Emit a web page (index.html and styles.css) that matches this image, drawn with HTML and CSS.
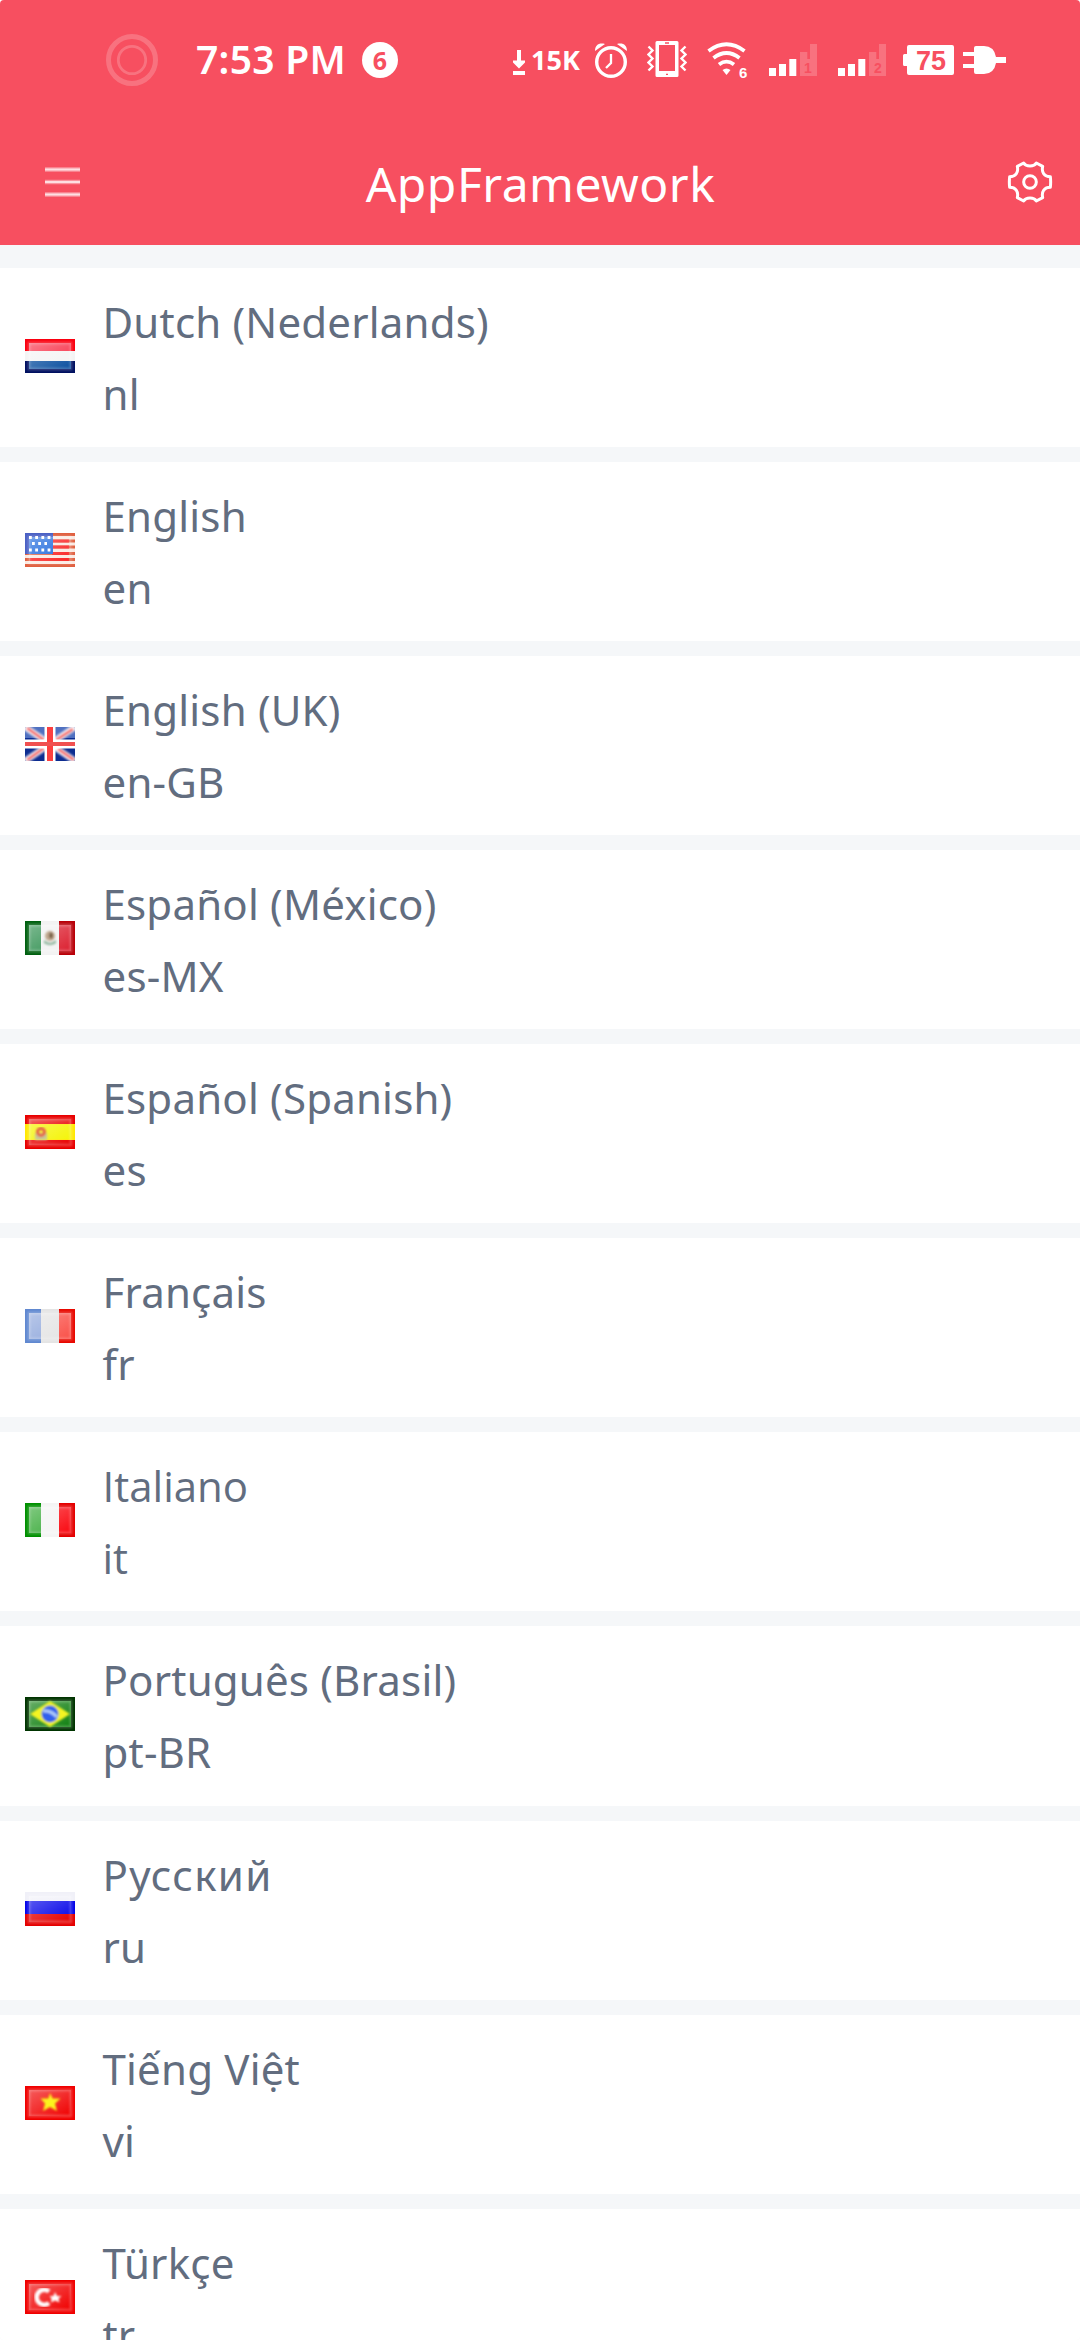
FILE: index.html
```html
<!DOCTYPE html>
<html lang="en">
<head>
<meta charset="utf-8">
<title>AppFramework</title>
<link rel="stylesheet" href="styles.css">
</head>
<body>
<svg width="0" height="0" class="defs">
  <defs>
    <linearGradient id="shine" x1="0" y1="0" x2="1" y2="1">
      <stop offset="0" stop-color="#fff" stop-opacity=".36"/>
      <stop offset="1" stop-color="#fff" stop-opacity="0"/>
    </linearGradient>
    <filter id="soft" x="-10%" y="-10%" width="120%" height="120%"><feGaussianBlur stdDeviation=".9"/></filter>
    <symbol id="gloss" viewBox="0 0 50 34">
      <rect x="4" y="4" width="42" height="26" fill="url(#shine)"/>
      <rect x="4" y="4" width="42" height="26" fill="none" stroke="#fff" stroke-opacity=".24" stroke-width="2.6" filter="url(#soft)"/>
    </symbol>
    <symbol id="signal" viewBox="0 0 48 32">
      <path fill="#fff" d="M0 24h7v8H0zM10 20h7v12h-7zM20.300 15h7v17h-7z"/>
      <path fill="#fff" fill-opacity=".2" d="M31 8h7.300v7H41V0h7v32H31z"/>
    </symbol>
  </defs>
</svg>

<div class="screen">
  <header class="header">
    <div class="status">
      <svg class="ring" width="52" height="52" viewBox="0 0 52 52" fill="none" stroke="#fff" stroke-opacity=".2">
        <circle cx="26" cy="26" r="23.500" stroke-width="5"/><circle cx="26" cy="26" r="13.700" stroke-width="2.800"/>
      </svg>
      <span class="time">7:53 PM</span>
      <span class="badge">6</span>
      <svg class="down" width="12" height="25" viewBox="0 0 12 25" fill="#fff"><path d="M4 0h4v10.500h4v2L6 18.500l-6-6v-2h4zM0 21h12v4H0z"/></svg>
      <span class="speed">15K</span>
      <svg class="alarm" width="34" height="36" viewBox="0 0 34 36" fill="none" stroke="#fff">
        <circle cx="17" cy="20" r="14.300" stroke-width="3.400"/>
        <path d="M17 12v9l-5 5" stroke-width="2.300"/>
        <path d="M1 9C1 3 5 .5 11 2L1 9zM33 9c0-6-4-8.500-10-7l10 7z" fill="#fff" stroke="none"/>
      </svg>
      <svg class="vibrate" width="40" height="36" viewBox="0 0 40 36">
        <path fill="#fff" fill-rule="evenodd" d="M10 0h20q1.500 0 1.500 1.500v33q0 1.500-1.500 1.500H10q-1.500 0-1.500-1.500v-33Q8.500 0 10 0zM12 4v26h16V4z"/>
        <path d="M18 2h4M19 33.300h2" stroke="#f74f60" stroke-width="1.300"/>
        <path d="M1.500 5.500l4 4-4 4 4 4-4 4 4 4-4 4M38.500 5.500l-4 4 4 4-4 4 4 4-4 4 4 4" fill="none" stroke="#fff" stroke-width="2.400"/>
      </svg>
      <svg class="wifi" width="44" height="40" viewBox="0 0 44 40" fill="none" stroke="#fff" stroke-width="3.800">
        <path d="M1.500 11Q19.500-2.500 37.500 11M6.500 18q13-10 26 0M12 24.500q7.500-5.800 15 0"/>
        <path d="M15.500 30q4-3 8 0l-4 5z" fill="#fff" stroke="none"/>
        <text x="32" y="37.500" class="wifi-gen">6</text>
      </svg>
      <svg class="sim1" width="48" height="32" viewBox="0 0 48 32"><use href="#signal" width="48" height="32"/><text x="39" y="29" class="sim">1</text></svg>
      <svg class="sim2" width="48" height="32" viewBox="0 0 48 32"><use href="#signal" width="48" height="32"/><text x="40" y="29" class="sim">2</text></svg>
      <svg class="battery" width="51" height="30" viewBox="0 0 51 30">
        <path fill="#fff" d="M6 0h43q2 0 2 2v26q0 2-2 2H6q-2 0-2-2v-7H1.500Q0 21 0 19.500v-9Q0 9 1.500 9H4V2q0-2 2-2z"/>
        <text x="28" y="24.500" class="charge">75</text>
      </svg>
      <svg class="plug" width="43" height="28" viewBox="0 0 43 28" fill="#fff"><path d="M13 0h8q10 0 12 11h10v6H33q-2 11-12 11h-8q-2 0-2-2v-4H0v-4h11v-8H0V6h11V2q0-2 2-2z"/></svg>
    </div>
    <div class="bar">
      <svg class="menu" width="35" height="30" viewBox="0 0 35 30" stroke="#fff">
        <path d="M0 2.500h35M0 15h35M0 27.500h35" stroke-width="4.400" stroke-opacity=".4"/><path d="M0 2.500h35M0 15h35M0 27.500h35" stroke-width="2" stroke-opacity=".7"/>
      </svg>
      <h1 class="title">AppFramework</h1>
      <svg class="gear" width="46" height="44" viewBox="81 92 138 132" fill="none" stroke="#fff" stroke-width="9" stroke-linejoin="round">
        <path d="M131 101C138 113 162 113 169 101L188 111C184 130 193 142 211 142Q213 158 211 174C193 174 184 186 188 205L169 215C162 203 138 203 131 215L112 205C116 186 107 174 89 174Q87 158 89 142C107 142 116 130 112 111Z"/>
        <circle cx="150" cy="158" r="19"/>
      </svg>
    </div>
  </header>

  <main class="list">
    <div class="row">
      <svg class="flag" viewBox="0 0 50 34">
        <path fill="#fa0010" d="M0 0h50v12H0z"/><path fill="#f4f4f4" d="M0 12h50v10H0z"/><path fill="#001060" d="M0 22h50v12H0z"/>
        <path fill="#f83048" d="M4 4h42v8H4z"/><path fill="#0c50a0" d="M4 22h42v8H4z"/><use href="#gloss"/>
      </svg>
      <div class="text"><div>Dutch (Nederlands)</div><div>nl</div></div>
    </div>
    <div class="row">
      <svg class="flag" viewBox="0 0 50 34">
        <path fill="#fae8e0" d="M0 0h50v34H0z"/>
        <path stroke="#e06040" stroke-width="3" d="M0 1.500h50M0 8h50M0 14h50M0 20.500h50M0 26.500h50M0 32.500h50"/>
        <path stroke="#fa2020" stroke-width="3" d="M27 8h17M27 14h17M27 20.500h17M5 26.500h39"/>
        <path fill="#4a60c4" d="M0 0h28v21H0z"/><path fill="#1a66dc" d="M4 4h24v17H4z"/>
        <path stroke="#fff" stroke-width="2.800" stroke-dasharray="2.800 3.400" d="M4 4.500h22M7 10.500h15M4 17h22"/><use href="#gloss"/>
      </svg>
      <div class="text"><div>English</div><div>en</div></div>
    </div>
    <div class="row">
      <svg class="flag" viewBox="0 0 50 34">
        <path fill="#0c2c90" d="M0 0h50v34H0z"/><path fill="#5070c0" d="M0 0h50v11H0z"/>
        <g filter="url(#soft)"><path stroke="#fff" stroke-width="6" d="M0 0l50 34M50 0L0 34"/><path stroke="#f46868" stroke-width="3" d="M2 1l17 12M48 2L31 13M33 22l16 11M2 33l17-12"/></g>
        <path stroke="#fff" stroke-width="11" d="M25 0v34"/><path stroke="#fff" stroke-width="9" d="M0 17h50"/><path stroke="#fc4040" stroke-width="6" d="M25 0v34"/><path stroke="#f05050" stroke-width="4" d="M0 17h50"/>
      </svg>
      <div class="text"><div>English (UK)</div><div>en-GB</div></div>
    </div>
    <div class="row">
      <svg class="flag" viewBox="0 0 50 34">
        <path fill="#006010" d="M0 0h16v34H0z"/><path fill="#f2f2f2" d="M16 0h18v34H16z"/><path fill="#b80008" d="M34 0h16v34H34z"/>
        <path fill="#309050" d="M4 4h12v26H4z"/><path fill="#dc2030" d="M34 4h12v26H34z"/><use href="#gloss"/>
        <g filter="url(#soft)"><circle cx="25" cy="15" r="5" fill="#c0a890"/><path d="M25 11l3 2-1 5-3-2z" fill="#70583c"/><path d="M19 19q6 6 12 0v3q-6 4-12 0z" fill="#86b096"/></g>
      </svg>
      <div class="text"><div>Español (México)</div><div>es-MX</div></div>
    </div>
    <div class="row">
      <svg class="flag" viewBox="0 0 50 34">
        <path fill="#e80000" d="M0 0h50v34H0z"/><path fill="#ffe800" d="M0 9h50v16H0z"/><path fill="#f4f400" d="M4 10h42v14H4z"/><use href="#gloss"/>
        <g filter="url(#soft)"><path d="M10 18h12v7H10z" fill="#c8c898"/><circle cx="16" cy="17" r="3.500" fill="none" stroke="#e46048" stroke-width="3"/></g>
      </svg>
      <div class="text"><div>Español (Spanish)</div><div>es</div></div>
    </div>
    <div class="row">
      <svg class="flag" viewBox="0 0 50 34">
        <path fill="#6088d0" d="M0 0h16v34H0z"/><path fill="#e4e4e4" d="M16 0h18v34H16z"/><path fill="#e80800" d="M34 0h16v34H34z"/>
        <path fill="#90a8dc" d="M4 4h12v26H4z"/><path fill="#fa5048" d="M34 4h12v26H34z"/><use href="#gloss"/>
      </svg>
      <div class="text"><div>Français</div><div>fr</div></div>
    </div>
    <div class="row">
      <svg class="flag" viewBox="0 0 50 34">
        <path fill="#009000" d="M0 0h16v34H0z"/><path fill="#f4f4f4" d="M16 0h18v34H16z"/><path fill="#e40000" d="M34 0h16v34H34z"/>
        <path fill="#38aa38" d="M4 4h12v26H4z"/><path fill="#fa0810" d="M34 4h12v26H34z"/><use href="#gloss"/>
      </svg>
      <div class="text plain-i"><div>Italiano</div><div>it</div></div>
    </div>
    <div class="row">
      <svg class="flag" viewBox="0 0 50 34">
        <path fill="#003400" d="M0 0h50v34H0z"/><path fill="#108010" d="M4 4h42v26H4z"/><use href="#gloss"/>
        <g filter="url(#soft)"><path d="M5 17L25 4l20 13-20 13z" fill="#f4f420"/><circle cx="25" cy="17" r="8.500" fill="#3060ec"/><path d="M18 14q8-1 14 6" fill="none" stroke="#b0ccfa" stroke-width="3"/></g>
      </svg>
      <div class="text"><div>Português (Brasil)</div><div>pt-BR</div></div>
    </div>
    <div class="row">
      <svg class="flag" viewBox="0 0 50 34">
        <path fill="#f0f0f8" d="M0 0h50v10H0z"/><path fill="#0404e8" d="M0 9h50v13H0z"/><path fill="#e40000" d="M0 22h50v12H0z"/><use href="#gloss"/>
      </svg>
      <div class="text"><div class="cyrillic">Русский</div><div>ru</div></div>
    </div>
    <div class="row">
      <svg class="flag" viewBox="0 0 50 34">
        <path fill="#f00000" d="M0 0h50v34H0z"/><use href="#gloss"/>
        <path d="M25 7l2.700 5.500h7.800L30 17.500l2 7.500-7-4-7 4 2-7.500-4.500-5h7.800z" fill="#fcf41c" filter="url(#soft)"/>
      </svg>
      <div class="text"><div>Tiếng Việt</div><div>vi</div></div>
    </div>
    <div class="row">
      <svg class="flag" viewBox="0 0 50 34">
        <path fill="#f00000" d="M0 0h50v34H0z"/><use href="#gloss"/>
        <g filter="url(#soft)"><path d="M24 11.500a7.500 7.500 0 1 0 0 11.500" fill="none" stroke="#fff" stroke-width="4.500"/><path d="M30 12l2 4h4.500l-3 2.500 1 4-4.500-2-4 2 .5-4-2-2.500h4z" fill="#fff"/></g>
      </svg>
      <div class="text"><div>Türkçe</div><div>tr</div></div>
    </div>
  </main>
</div>
</body>
</html>
```
FILE: styles.css
```css
* { box-sizing: border-box; }

body {
  margin: 0;
  background: #fff;
  font-family: "Noto Sans", "Open Sans", sans-serif;
}

.defs { position: absolute; }

.screen {
  width: 1080px;
  height: 2340px;
  overflow: hidden;
  background: #f5f7f9;
  border-radius: 4px;
}

.header {
  height: 245px;
  background: #f74f60;
  color: #fff;
}

.status {
  display: flex;
  align-items: center;
  height: 120px;
  padding-left: 106px;
}

.status svg { flex: none; }

.time {
  width: 151px;
  margin: 0 0 2px 38px;
  font-size: 39px;
  font-weight: 600;
  letter-spacing: 0.3px;
  line-height: 56px;
  white-space: nowrap;
}

.badge {
  width: 36px;
  height: 36px;
  margin-left: 15px;
  border-radius: 50%;
  background: #fff;
  color: #f74f60;
  font-size: 25px;
  font-weight: 700;
  line-height: 36px;
  text-align: center;
}

.down { margin: 5px 0 0 115px; }

.speed {
  width: 50px;
  margin-left: 6px;
  font-size: 27px;
  font-weight: 700;
  line-height: 36px;
  white-space: nowrap;
}

.alarm { margin-left: 13px; }
.vibrate { margin: 0 0 2px 19px; }
.wifi { margin-left: 20px; }
.sim1 { margin-left: 18px; }
.sim2 { margin-left: 21px; }
.battery { margin-left: 17px; }
.plug { margin-left: 9px; }

.wifi-gen, .sim, .charge {
  font-family: "Liberation Sans", sans-serif;
  font-weight: 700;
  stroke: none;
}

.wifi-gen { fill: #fff; font-size: 15px; }
.sim { fill: #f74f60; font-size: 14px; text-anchor: middle; }
.charge { fill: #f74f60; font-size: 27px; text-anchor: middle; }

.bar {
  display: flex;
  align-items: center;
  justify-content: space-between;
  height: 125px;
  padding: 0 27px 0 45px;
}

.title {
  margin: 2px 6px 0 0;
  font-size: 48px;
  font-weight: 400;
  letter-spacing: 0.5px;
  line-height: 60px;
}

.menu, .gear { margin-bottom: 1px; }

.list {
  display: flex;
  flex-direction: column;
  gap: 15px;
  padding-top: 23px;
}

.row {
  display: flex;
  flex: none;
  align-items: center;
  gap: 27.5px;
  height: 179.0625px;
  padding: 0 25px;
  background: #fff;
}

.flag {
  flex: none;
  width: 50px;
  height: 34px;
  margin-bottom: 3px;
}

.text {
  margin-top: 1px;
  color: #626d7f;
  font-size: 42px;
  letter-spacing: 0.2px;
  line-height: 72px;
}

.plain-i { font-family: "Open Sans", sans-serif; letter-spacing: 0; }
.cyrillic { letter-spacing: 1.3px; }
```
